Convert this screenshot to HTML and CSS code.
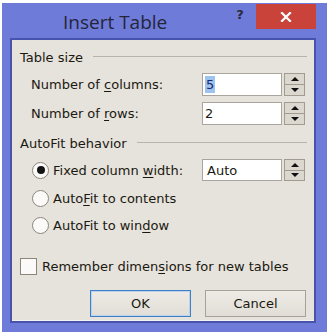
FILE: index.html
```html
<!DOCTYPE html>
<html>
<head>
<meta charset="utf-8">
<link rel="stylesheet" href="styles.css">
</head>
<body>
<div class="frame">
  <div class="titlebar">
    <div class="title">Insert Table</div>
    <div class="help">?</div>
    <div class="close"><svg width="12" height="10" viewBox="0 0 12 10"><path d="M2 1 L10 9 M10 1 L2 9" stroke="#fff" stroke-width="2.2" stroke-linecap="square"/></svg></div>
  </div>
  <div class="panel">
    <div class="group-head g1"><span>Table size</span><i class="rule"></i></div>
    <div class="field-row r1">
      <span class="lbl">Number of <u>c</u>olumns:</span>
      <div class="spinbox"><div class="input"><span class="sel">5</span></div><div class="spin"><b class="up"></b><b class="down"></b></div></div>
    </div>
    <div class="field-row r2">
      <span class="lbl">Number of <u>r</u>ows:</span>
      <div class="spinbox"><div class="input">2</div><div class="spin"><b class="up"></b><b class="down"></b></div></div>
    </div>
    <div class="group-head g2"><span>AutoFit behavior</span><i class="rule"></i></div>
    <div class="field-row radio-row rr1">
      <span class="radio on"></span>
      <span class="rlbl">Fixed column <u>w</u>idth:</span>
      <div class="spinbox"><div class="input">Auto</div><div class="spin"><b class="up"></b><b class="down"></b></div></div>
    </div>
    <div class="field-row radio-row rr2">
      <span class="radio"></span>
      <span class="rlbl">Auto<u>F</u>it to contents</span>
    </div>
    <div class="field-row radio-row rr3">
      <span class="radio"></span>
      <span class="rlbl">AutoFit to win<u>d</u>ow</span>
    </div>
    <div class="check-row">
      <span class="check"></span>
      <span class="clbl">Remember dimen<u>s</u>ions for new tables</span>
    </div>
    <div class="buttons">
      <div class="btn ok">OK</div>
      <div class="btn">Cancel</div>
    </div>
  </div>
</div>
</body>
</html>
```

FILE: styles.css
```css
html, body {
  margin: 0;
  padding: 0;
  background: #ffffff;
  width: 330px;
  height: 336px;
  overflow: hidden;
}
.frame {
  margin: 3px 0 0 2px;
  width: 325px;
  height: 329px;
  background: #6f7bd8;
  box-sizing: border-box;
  padding: 0 11px 9px 8px;
  display: flex;
  flex-direction: column;
}
.titlebar {
  height: 35px;
  flex: none;
  display: flex;
  align-items: flex-start;
}
.title {
  font-family: "Open Sans", sans-serif;
  font-size: 19px;
  color: #23253a;
  margin: 5px 0 0 53px;
  line-height: 28px;
  flex: none;
}
.help {
  font-family: "DejaVu Sans", sans-serif;
  font-weight: bold;
  font-size: 13px;
  color: #2a2a3a;
  margin: 4px 0 0 69px;
  flex: none;
}
.close {
  margin: 1px -1px 0 12px;
  width: 60px;
  height: 25px;
  background: #c9433b;
  display: flex;
  align-items: center;
  justify-content: center;
  flex: none;
}
.panel {
  flex: 1;
  background: #e6e2dc;
  border: 2px solid #4853ad;
  box-shadow: inset 0 -1px 0 #f4f2ef;
  padding: 8px 7px 0 8px;
  font-family: "DejaVu Sans", sans-serif;
  font-size: 13px;
  color: #1a1910;
  display: flex;
  flex-direction: column;
}
u { text-decoration: underline; text-underline-offset: 2px; }
.group-head {
  height: 18px;
  display: flex;
  align-items: center;
  flex: none;
}
.group-head .rule {
  flex: 1;
  height: 1px;
  background: #b9b4ac;
  margin-left: 10px;
  margin-top: -1px;
}
.g2 { margin-top: 9px; }
.field-row {
  display: flex;
  align-items: center;
  height: 23px;
  flex: none;
}
.r1 { margin-top: 7px; }
.r2 { margin-top: 6px; }
.lbl { margin-left: 11px; }
.spinbox {
  margin-left: auto;
  margin-right: 2px;
  display: flex;
  height: 23px;
}
.input {
  width: 80px;
  box-sizing: border-box;
  height: 23px;
  background: #fff;
  border: 1px solid #a9a49c;
  padding-left: 2px;
  display: flex;
  align-items: center;
}
.sel {
  background: #9dc3ee;
  color: #1a2870;
  padding: 0 1px;
  line-height: 17px;
}
.spin {
  width: 21px;
  margin-left: 2px;
  box-sizing: border-box;
  border: 1px solid #a19b92;
  background: #dcd7cf;
  display: flex;
  flex-direction: column;
}
.spin b {
  flex: 1;
  display: flex;
  align-items: center;
  justify-content: center;
}
.spin .up { border-bottom: 1px solid #a19b92; }
.spin .up::before {
  content: "";
  border-left: 4px solid transparent;
  border-right: 4px solid transparent;
  border-bottom: 4px solid #111;
}
.spin .down::before {
  content: "";
  border-left: 4px solid transparent;
  border-right: 4px solid transparent;
  border-top: 4px solid #111;
}
.radio-row { height: 22px; }
.radio-row .spinbox { height: 22px; }
.radio-row .input { height: 22px; padding-left: 4px; }
.rr1 { margin-top: 7px; }
.rr2 { margin-top: 6px; }
.rr3 { margin-top: 5px; }
.radio {
  width: 17px;
  height: 17px;
  box-sizing: border-box;
  border-radius: 50%;
  border: 1.5px solid #8a857d;
  background: #fbfaf8;
  margin-left: 12px;
  margin-right: 4px;
  display: flex;
  align-items: center;
  justify-content: center;
  flex: none;
}
.radio.on::before {
  content: "";
  width: 8px;
  height: 8px;
  border-radius: 50%;
  background: #141414;
}
.check-row {
  margin-top: 21px;
  height: 18px;
  display: flex;
  align-items: center;
  flex: none;
}
.check {
  width: 17px;
  height: 17px;
  box-sizing: border-box;
  border: 1px solid #8a857d;
  background: #fbfaf8;
  margin-right: 5px;
}
.buttons {
  margin-top: 15px;
  display: flex;
  justify-content: flex-end;
  gap: 14px;
  padding-right: 1px;
}
.btn {
  width: 101px;
  height: 27px;
  box-sizing: border-box;
  border: 1px solid #a6a199;
  background: linear-gradient(#eeebe6, #e1ddd6);
  display: flex;
  align-items: center;
  justify-content: center;
}
.btn.ok {
  border: 1px solid #3f7fc6;
  box-shadow: inset 0 0 0 1px #bcd3ee;
}
```
